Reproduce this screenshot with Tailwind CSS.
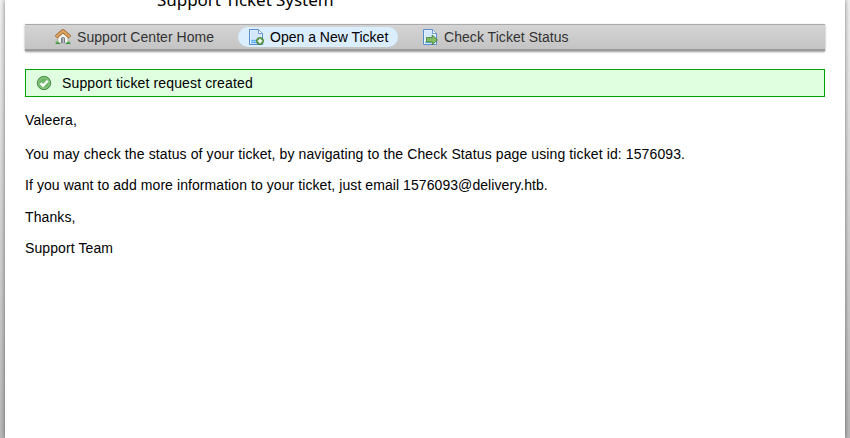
<!DOCTYPE html>
<html lang="en">
<head>
<meta charset="utf-8">
<title>Support Ticket System</title>
<script src="https://cdn.jsdelivr.net/npm/@tailwindcss/browser@4"></script>
</head>
<body class="h-[438px] overflow-hidden bg-linear-to-b from-[#f2f2f2] to-[#bababa] font-['Liberation_Sans',Arial,sans-serif] text-[14px] leading-4 text-black">
<main class="mx-[5px] h-[438px] bg-white px-5 shadow-[0_0_5px_rgba(0,0,0,0.5)]">
  <header class="h-6 overflow-hidden pl-[132px]">
    <h1 class="-mt-[12px] text-[17px] leading-6 tracking-[-0.05px] whitespace-nowrap font-['Noto_Sans',sans-serif]">Support Ticket System</h1>
  </header>
  <nav class="flex h-[27px] items-start border-t border-b-2 border-t-[#aaa] border-b-[#999] bg-linear-to-b from-[#d4d4d4] to-[#c4c4c4] pt-[2px] tracking-[0.05px] text-[#333] shadow-[0_1px_2px_rgba(0,0,0,0.4)]">
    <a class="ml-5 flex h-5 w-[179px] items-center gap-[6px] pl-[10px]">
      <svg class="size-4" viewBox="0 0 16 16">
        <path d="M3 7 8 2.5 13 7v7H3z" fill="#f5f5ef" stroke="#aaa59b" stroke-width=".7"/>
        <path d="M6 14V9.5Q6 8 8 8t2 1.5V14z" fill="#737980"/><path d="M7.5 14V9H9v5z" fill="#b7bec7"/>
        <path d="M1 8.2 8 2l7 6.2" fill="none" stroke="#9a6530" stroke-width="3.8" stroke-linejoin="round"/>
        <path d="M1.2 7.8 8 1.9l6.8 5.9" fill="none" stroke="#dda561" stroke-width="2.3"/>
        <path d="M0 14.5 1 12.5l2-.2 2 2.4zM11 14.7l1.5-2.2 2-.1 1.5 2.3z" fill="#62ae55"/>
        <path d="M1 14.5h4m6 0h4" stroke="#3e8c40"/>
      </svg>
      <span>Support Center Home</span>
    </a>
    <a class="ml-[14px] flex h-5 w-40 items-center gap-[6px] rounded-[10px] bg-[#dbeefe] pl-[10px] tracking-normal text-black">
      <svg class="size-4" viewBox="0 0 16 16">
        <path d="M1.5.5h9l4 4v11h-13z" fill="#e8f3ff" stroke="#5a8dce"/>
        <path d="M2.5 1.5h7.5v4h3.5v5h-11z" fill="#d5e8fb"/><path d="M10.5.8v3.7h3.7" fill="#fff" stroke="#5a8dce" stroke-width=".9"/>
        <path d="M3 11.5h7M3 13.5h6" stroke="#5cb0f5" stroke-width="1.4"/>
        <circle cx="12" cy="12" r="3.6" fill="#66a052" stroke="#3c7a31" stroke-width=".7"/>
        <path d="M12 9.8v4.4M9.8 12h4.4" stroke="#fff" stroke-width="1.5"/>
      </svg>
      <span>Open a New Ticket</span>
    </a>
    <a class="ml-[14px] flex h-5 items-center gap-[6px] pl-[10px]">
      <svg class="size-4" viewBox="0 0 16 16">
        <path d="M1.5.5h9l4 4v11h-13z" fill="#eef6ff" stroke="#5a8dce"/>
        <path d="M2.5 1.5h7.5v4h3.5v5h-11z" fill="#d5e8fb"/><path d="M10.5.8v3.7h3.7" fill="#fff" stroke="#5a8dce" stroke-width=".9"/>
        <path d="M3 13.5h6" stroke="#5cb0f5" stroke-width="1.4"/>
        <path d="M4.5 8.6h5.7V6l5.3 4.9-5.3 4.7v-2.7H4.5z" fill="#85bd62" stroke="#43823a" stroke-width=".9"/>
      </svg>
      <span>Check Ticket Status</span>
    </a>
  </nav>
  <div class="mt-[18px] flex h-7 items-center gap-[10px] border border-[#00a300] bg-[#e0ffe0] pl-[10px]">
    <svg class="size-4" viewBox="0 0 16 16">
      <circle cx="8" cy="8" r="6.7" fill="#5fac5b" stroke="#478d49"/>
      <circle cx="8" cy="8" r="5.4" fill="#6fb668" stroke="#a0d396" stroke-width=".8"/>
      <path d="m4.7 8.2 2.4 2.5 4.6-5" fill="none" stroke="#fff" stroke-width="2.4"/>
    </svg>
    <span class="tracking-[0.135px]">Support ticket request created</span>
  </div>
  <p class="mt-[15px] tracking-[0.1px]">Valeera,</p>
  <p class="mt-[18px] tracking-[0.11px]">You may check the status of your ticket, by navigating to the Check Status page using ticket id: 1576093.</p>
  <p class="mt-[15px] tracking-[0.073px]">If you want to add more information to your ticket, just email 1576093@delivery.htb.</p>
  <p class="mt-[16px] tracking-[0.1px]">Thanks,</p>
  <p class="mt-[15px] tracking-[0.1px]">Support Team</p>
</main>
</body>
</html>
